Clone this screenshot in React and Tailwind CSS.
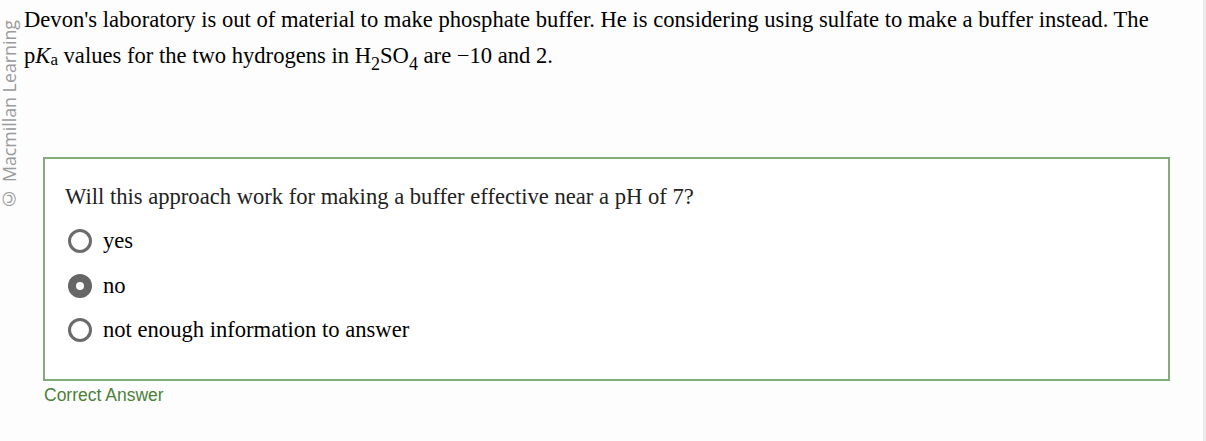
import React from "react";

function Radio({ checked }) {
  if (checked) {
    return (
      <span className="flex h-[24px] w-[24px] shrink-0 items-center justify-center rounded-full bg-[#666666]">
        <span className="h-[8px] w-[8px] rounded-full bg-white" />
      </span>
    );
  }
  return <span className="block h-[24px] w-[24px] shrink-0 rounded-full border-[3px] border-[#6b6b6b] bg-white" />;
}

function Option({ label, checked }) {
  return (
    <div className="flex h-[44.5px] items-center gap-[11px] pl-[23px]">
      <Radio checked={checked} />
      <span className="text-[22.6px] leading-[28px] text-black">{label}</span>
    </div>
  );
}

export default function App() {
  return (
    <div className="relative flex h-[441px] w-[1206px] bg-[#fdfdfd] [font-family:'Liberation_Serif',serif]">
      <div className="absolute left-0 top-[20px] text-[17.8px] leading-[18px] text-[#9a9a9a] [writing-mode:vertical-rl] rotate-180 [font-family:'Open_Sans',sans-serif]">
        © Macmillan Learning
      </div>
      <div className="flex-1 pl-[24px] pt-[3px]">
        <div className="text-[22.6px] leading-[34px] text-black">
          <div className="whitespace-nowrap">
            Devon's laboratory is out of material to make phosphate buffer. He is considering using sulfate to make a buffer instead. The
          </div>
          <div className="h-[36px] whitespace-nowrap pt-[2px]">
            p<i>K</i>
            <span className="relative top-[2px] text-[17px]">a</span> values for the two hydrogens in H
            <span className="relative top-[7px] text-[18px]">2</span>SO
            <span className="relative top-[7px] text-[18px]">4</span> are −10 and 2.
          </div>
        </div>
        <div className="ml-[19px] mt-[84px] h-[224px] w-[1127px] border-2 border-[#82ad78] bg-white pl-[20px] pt-[24px]">
          <div className="text-[22.6px] leading-[28px] text-[#222]">
            Will this approach work for making a buffer effective near a pH of 7?
          </div>
          <div className="mt-[8px] -ml-[20px]">
            <Option label="yes" />
            <Option label="no" checked />
            <Option label="not enough information to answer" />
          </div>
        </div>
        <div className="ml-[20px] mt-[4px] text-[17.5px] leading-[20px] text-[#4b8039] [font-family:'Liberation_Sans',sans-serif]">
          Correct Answer
        </div>
      </div>
      <div className="w-[3px] bg-[#ebebeb]" />
    </div>
  );
}
